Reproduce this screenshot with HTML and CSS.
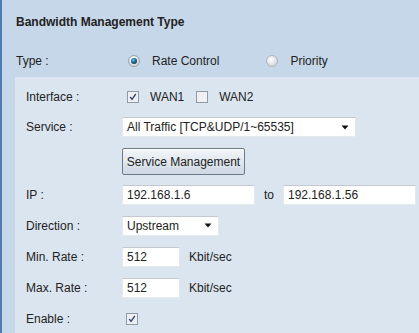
FILE: index.html
```html
<!DOCTYPE html>
<html>
<head>
<meta charset="utf-8">
<link rel="stylesheet" href="styles.css">
</head>
<body>
<div class="page">
  <div class="title">Bandwidth Management Type</div>
  <div class="type-row">
    <span class="top-label">Type :</span>
    <svg class="radio" viewBox="0 0 12 12"><defs><radialGradient id="rg1" cx="0.4" cy="0.35" r="0.7"><stop offset="0" stop-color="#ffffff"/><stop offset="1" stop-color="#c9ced4"/></radialGradient><radialGradient id="dot" cx="0.4" cy="0.35" r="0.7"><stop offset="0" stop-color="#7fc0e0"/><stop offset="0.5" stop-color="#1f6f9a"/><stop offset="1" stop-color="#0d3c5c"/></radialGradient></defs><circle cx="6" cy="6" r="5.5" fill="url(#rg1)" stroke="#9aa3ad"/><circle cx="6" cy="6" r="3" fill="url(#dot)"/></svg>
    <span class="opt">Rate Control</span>
    <svg class="radio second" viewBox="0 0 12 12"><defs><radialGradient id="rg2" cx="0.4" cy="0.35" r="0.7"><stop offset="0" stop-color="#ffffff"/><stop offset="1" stop-color="#cfd3d8"/></radialGradient></defs><circle cx="6" cy="6" r="5.5" fill="url(#rg2)" stroke="#aab1b9"/></svg>
    <span class="opt">Priority</span>
  </div>
  <div class="panel">
    <div class="row r30">
      <span class="label">Interface :</span>
      <svg class="check" viewBox="0 0 12 12"><rect x="0.5" y="0.5" width="11" height="11" fill="#eef0f3" stroke="#8e9aa6"/><path d="M3.2 6 L5 8.3 L8.8 3" fill="none" stroke="#34456f" stroke-width="1.3"/></svg>
      <span class="opt">WAN1</span>
      <svg class="check second" viewBox="0 0 12 12"><rect x="0.5" y="0.5" width="11" height="11" fill="#eef0f3" stroke="#8e9aa6"/></svg>
      <span class="opt">WAN2</span>
    </div>
    <div class="row r30">
      <span class="label">Service :</span>
      <div class="select service"><span>All Traffic [TCP&amp;UDP/1~65535]</span><svg class="arrow" viewBox="0 0 8 5"><path d="M0.5 0.5 H7.5 L4 4.5 Z" fill="#111"/></svg></div>
    </div>
    <div class="row btn-row">
      <span class="label"></span>
      <div class="button">Service Management</div>
    </div>
    <div class="row">
      <span class="label">IP :</span>
      <div class="input ip">192.168.1.6</div>
      <span class="to">to</span>
      <div class="input ip">192.168.1.56</div>
    </div>
    <div class="row">
      <span class="label">Direction :</span>
      <div class="select direction"><span>Upstream</span><svg class="arrow" viewBox="0 0 8 5"><path d="M0.5 0.5 H7.5 L4 4.5 Z" fill="#111"/></svg></div>
    </div>
    <div class="row">
      <span class="label">Min. Rate :</span>
      <div class="input rate">512</div>
      <span class="unit">Kbit/sec</span>
    </div>
    <div class="row">
      <span class="label">Max. Rate :</span>
      <div class="input rate">512</div>
      <span class="unit">Kbit/sec</span>
    </div>
    <div class="row">
      <span class="label">Enable :</span>
      <svg class="check enable" viewBox="0 0 12 12"><rect x="0.5" y="0.5" width="11" height="11" fill="#eef0f3" stroke="#8e9aa6"/><path d="M3.2 6 L5 8.3 L8.8 3" fill="none" stroke="#34456f" stroke-width="1.3"/></svg>
    </div>
  </div>
</div>
</body>
</html>
```
FILE: styles.css
```css
html, body {
  margin: 0;
  padding: 0;
}
body {
  font: 12px "Liberation Sans", Arial, sans-serif;
  color: #222;
  background: #c6d7e9;
}
.page {
  height: 333px;
  background: #c6d7e9;
  border-left: 2px solid #4d7db5;
  box-sizing: border-box;
  overflow: hidden;
}
.title {
  height: 44px;
  line-height: 44px;
  padding-left: 14px;
  font-weight: bold;
}
.type-row {
  height: 33px;
  display: flex;
  align-items: center;
  padding-left: 14px;
}
.top-label {
  width: 106px;
  flex: none;
}
.radio {
  width: 12px;
  height: 12px;
  flex: none;
  margin-left: 6px;
  margin-right: 12px;
}
.radio.second {
  margin-left: 47px;
}
.panel {
  margin-left: 13px;
  background: #dbe5f0;
  padding: 5px 0 40px 11px;
}
.row {
  display: flex;
  align-items: center;
  height: 31px;
  white-space: nowrap;
}
.row.r30 {
  height: 30px;
}
.row.btn-row {
  height: 37px;
  padding-top: 2px;
  box-sizing: border-box;
}
.label {
  width: 96px;
  flex: none;
}
.check {
  width: 12px;
  height: 12px;
  flex: none;
  margin-left: 5px;
  margin-right: 11px;
}
.check.second {
  margin-left: 12px;
}
.check.enable {
  margin-left: 4px;
}
.select {
  height: 20px;
  box-sizing: border-box;
  background: #fff;
  border: 1px solid #e4e9ee;
  border-top-color: #c3c9cf;
  display: flex;
  align-items: center;
  justify-content: space-between;
  padding: 0 6px 0 4px;
  flex: none;
}
.select.service {
  width: 234px;
}
.select.direction {
  width: 97px;
}
.arrow {
  width: 8px;
  height: 5px;
}
.button {
  width: 123px;
  height: 27px;
  box-sizing: border-box;
  border: 1px solid #6d7b89;
  border-radius: 2px;
  background: linear-gradient(#f3f6f9, #dfe6ee 55%, #cdd7e2);
  box-shadow: inset 0 1px 0 #fff;
  display: flex;
  align-items: center;
  justify-content: center;
  color: #222;
}
.input {
  height: 20px;
  box-sizing: border-box;
  background: #fff;
  border: 1px solid #e4e9ee;
  border-top-color: #c3c9cf;
  padding-left: 4px;
  display: flex;
  align-items: center;
  flex: none;
}
.input.ip {
  width: 133px;
}
.input.rate {
  width: 58px;
}
.to {
  margin-left: 9px;
  margin-right: 9px;
}
.unit {
  margin-left: 9px;
}
```
